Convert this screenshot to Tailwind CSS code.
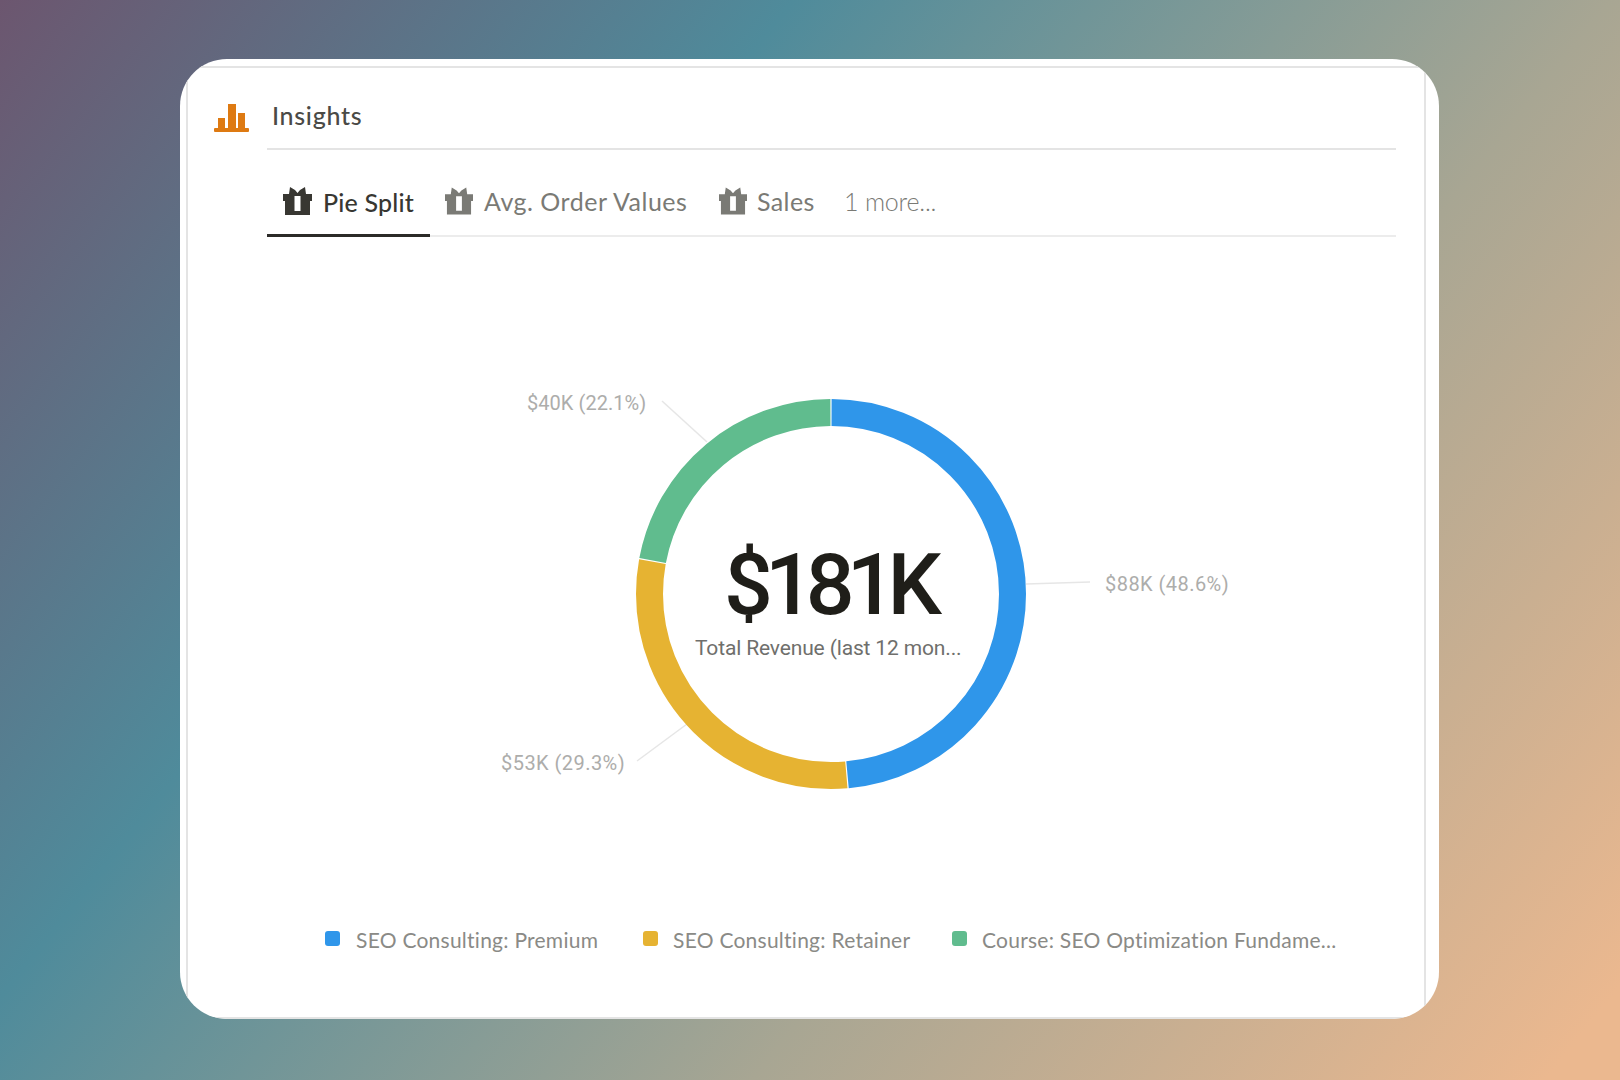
<!DOCTYPE html>
<html lang="en">
<head>
<meta charset="utf-8">
<title>Insights</title>
<script src="https://cdn.jsdelivr.net/npm/@tailwindcss/browser@4"></script>
</head>
<body class="m-0">
<div class="w-[1620px] h-[1080px] overflow-hidden pt-[59px] pl-[180px] bg-[linear-gradient(128.5deg,#6c566f_0%,#4f8b9b_32%,#a8a693_65%,#ebb88f_97%)] font-['Lato',sans-serif]">
  <div class="w-[1259px] h-[960px] rounded-[47px] bg-white overflow-hidden pt-[7px] pl-[6px]">
    <div class="w-[1240px] h-[953px] border-2 border-[#e4e4e4] flex">
      <div class="w-[79px] shrink-0 pt-[36px] pl-[26px]">
        <svg class="w-[35px] h-[28px] block" viewBox="0 0 35 28" fill="#de7a12"><rect x="4" y="14" width="7" height="11"/><rect x="14" y="0" width="8" height="25"/><rect x="24" y="9" width="7" height="16"/><rect x="0" y="24" width="35" height="4" rx="1"/></svg>
      </div>
      <div class="w-[1129px] shrink-0 flex flex-col">
        <div class="h-[82px] shrink-0 border-b-2 border-[#e4e4e4] pl-[5px] pt-[31px] text-[25px] leading-[32px] font-medium tracking-[0.7px] text-[#4a4a46]">Insights</div>
        <div class="h-[87px] shrink-0 border-b-2 border-[#ececec] flex relative text-[25px] leading-[32px] text-[#7a7a75]">
          <div class="absolute left-0 top-[84px] w-[163px] h-[3px] bg-[#2b2a28]"></div>
          <div class="w-[178px] shrink-0 flex items-center gap-[11px] pl-[16px] pt-[24px] pb-[5px] text-[#383732] font-medium tracking-[0.2px]">
            <svg class="w-[29px] h-[28px] shrink-0 -mt-[2px]" viewBox="0 0 29 28" fill="currentColor"><path fill-rule="evenodd" d="M7 0l5 3 2.500 3L17 3l5-3 1 7h6v7h-2v14H2V14H0V7h6zM11.500 9v15h6V9z"/></svg>
            <span>Pie Split</span>
          </div>
          <div class="w-[274px] shrink-0 flex items-center gap-[11px] pt-[22px] pb-[5px] tracking-[0.5px]">
            <svg class="w-[28px] h-[28px] shrink-0" viewBox="0 0 29 28" fill="currentColor"><path fill-rule="evenodd" d="M7 0l5 3 2.500 3L17 3l5-3 1 7h6v7h-2v14H2V14H0V7h6zM11.500 9v15h6V9z"/></svg>
            <span class="whitespace-nowrap">Avg. Order Values</span>
          </div>
          <div class="w-[125px] shrink-0 flex items-center gap-[10px] pt-[22px] pb-[5px] tracking-[0.4px]">
            <svg class="w-[28px] h-[28px] shrink-0" viewBox="0 0 29 28" fill="currentColor"><path fill-rule="evenodd" d="M7 0l5 3 2.500 3L17 3l5-3 1 7h6v7h-2v14H2V14H0V7h6zM11.500 9v15h6V9z"/></svg>
            <span>Sales</span>
          </div>
          <div class="flex items-center pt-[22px] pb-[5px] whitespace-nowrap tracking-[-0.2px] font-light">1 more...</div>
        </div>
        <div class="relative h-[688px] shrink-0 font-['Roboto',sans-serif]">
          <svg class="absolute left-0 top-0" width="1129" height="688" viewBox="0 0 1129 688" fill="none">
            <g stroke="#e6e6e6" stroke-width="1.5">
              <path d="M395 164L440 205"/>
              <path d="M370 524L420 487"/>
              <path d="M759 347L823 345"/>
            </g>
            <g transform="rotate(-90 564 357)" stroke-width="27">
              <circle cx="564" cy="357" r="181.5" pathLength="100" stroke="#2f96ea" stroke-dasharray="48.5 51.5" stroke-dashoffset="-0.05"/>
              <circle cx="564" cy="357" r="181.5" pathLength="100" stroke="#e6b332" stroke-dasharray="29.2 70.8" stroke-dashoffset="-48.65"/>
              <circle cx="564" cy="357" r="181.5" pathLength="100" stroke="#60bc8e" stroke-dasharray="22 78" stroke-dashoffset="-77.95"/>
            </g>
          </svg>
          <div class="absolute left-[260px] top-[154px] text-[20px] leading-[24px] tracking-[0.05px] text-[#adadab] whitespace-nowrap">$40K (22.1%)</div>
          <div class="absolute left-[234px] top-[514px] text-[20px] leading-[24px] tracking-[0.45px] text-[#adadab] whitespace-nowrap">$53K (29.3%)</div>
          <div class="absolute left-[838px] top-[335px] text-[20px] leading-[24px] tracking-[0.45px] text-[#adadab] whitespace-nowrap">$88K (48.6%)</div>
          <div class="absolute left-[457px] top-[298px] text-[86px] leading-[100px] tracking-[-8px] font-medium text-[#1f1e19] whitespace-nowrap">$181K</div>
          <div class="absolute left-[428px] top-[398px] text-[21px] leading-[26px] tracking-[-0.15px] text-[#6f6f6c] whitespace-nowrap">Total Revenue (last 12 mon...</div>
        </div>
        <div class="flex items-center h-[30px] pl-[58px] text-[21px] leading-[30px] tracking-[0.25px] text-[#8a8a86] whitespace-nowrap">
          <div class="w-[318px] shrink-0 flex items-center gap-[16px]"><span class="w-[15px] h-[15px] rounded-[3px] bg-[#2f96ea] -mt-[3px]"></span><span>SEO Consulting: Premium</span></div>
          <div class="w-[309px] shrink-0 flex items-center gap-[15px]"><span class="w-[15px] h-[15px] rounded-[3px] bg-[#e6b332] -mt-[3px]"></span><span>SEO Consulting: Retainer</span></div>
          <div class="flex items-center gap-[15px]"><span class="w-[15px] h-[15px] rounded-[3px] bg-[#60bc8e] -mt-[3px]"></span><span>Course: SEO Optimization Fundame...</span></div>
        </div>
      </div>
    </div>
  </div>
</div>
</body>
</html>
